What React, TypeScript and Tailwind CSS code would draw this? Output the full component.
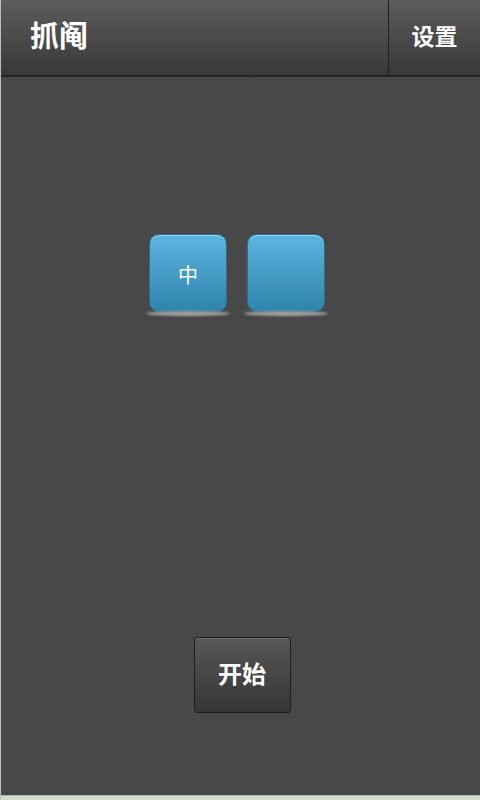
import React from 'react';

const CJK = { fontFamily: '"Noto Sans CJK SC", "Noto Sans", sans-serif' };

function Tile({ label }: { label?: string }) {
  return (
    <div className="flex flex-col items-center">
      <div className="w-[78px] h-[78px] rounded-[10px] border border-[#2a6f93] bg-gradient-to-b from-[#5cb6e0] to-[#2f84ad] shadow-[inset_0_1px_0_rgba(255,255,255,0.45)] flex items-center justify-center pt-[4px] text-white text-[20px]">
        {label}
      </div>
      <div className="w-[84px] h-[5px] -mt-[1px] rounded-[50%] bg-[#a0a0a0] blur-[1px]" />
    </div>
  );
}

export default function App() {
  return (
    <div style={CJK} className="w-[480px] h-[800px] flex flex-col bg-[#484848] border-l border-[#b8c4b0]">
      {/* Header */}
      <div className="h-[77px] flex bg-gradient-to-b from-[#5c5c5c] to-[#393939] border-b-2 border-[#222]">
        <div className="flex-1 flex items-center pl-[29px] pb-[6px]">
          <span className="text-white text-[29px] font-bold">抓阄</span>
        </div>
        <div className="w-[92px] flex items-center justify-center border-l border-[#1f1f1f] pb-[4px]">
          <span className="text-white text-[23px] font-bold">设置</span>
        </div>
      </div>

      {/* Body */}
      <div className="flex-1 flex flex-col items-center">
        <div className="mt-[157px] flex gap-[14px] mr-[7px]">
          <Tile label="中" />
          <Tile />
        </div>
        <div className="flex-1" />
        <button className="mb-[82px] w-[97px] h-[76px] rounded-[3px] border border-[#1e1e1e] bg-gradient-to-b from-[#575757] to-[#363636] shadow-[inset_0_1px_0_rgba(255,255,255,0.15)] text-white text-[24px] font-bold ml-[3px] pb-[4px]">
          开始
        </button>
      </div>

      {/* bottom strip */}
      <div className="h-[5px] bg-[#d4dccc] border-t border-[#aab4a2]" />
    </div>
  );
}
